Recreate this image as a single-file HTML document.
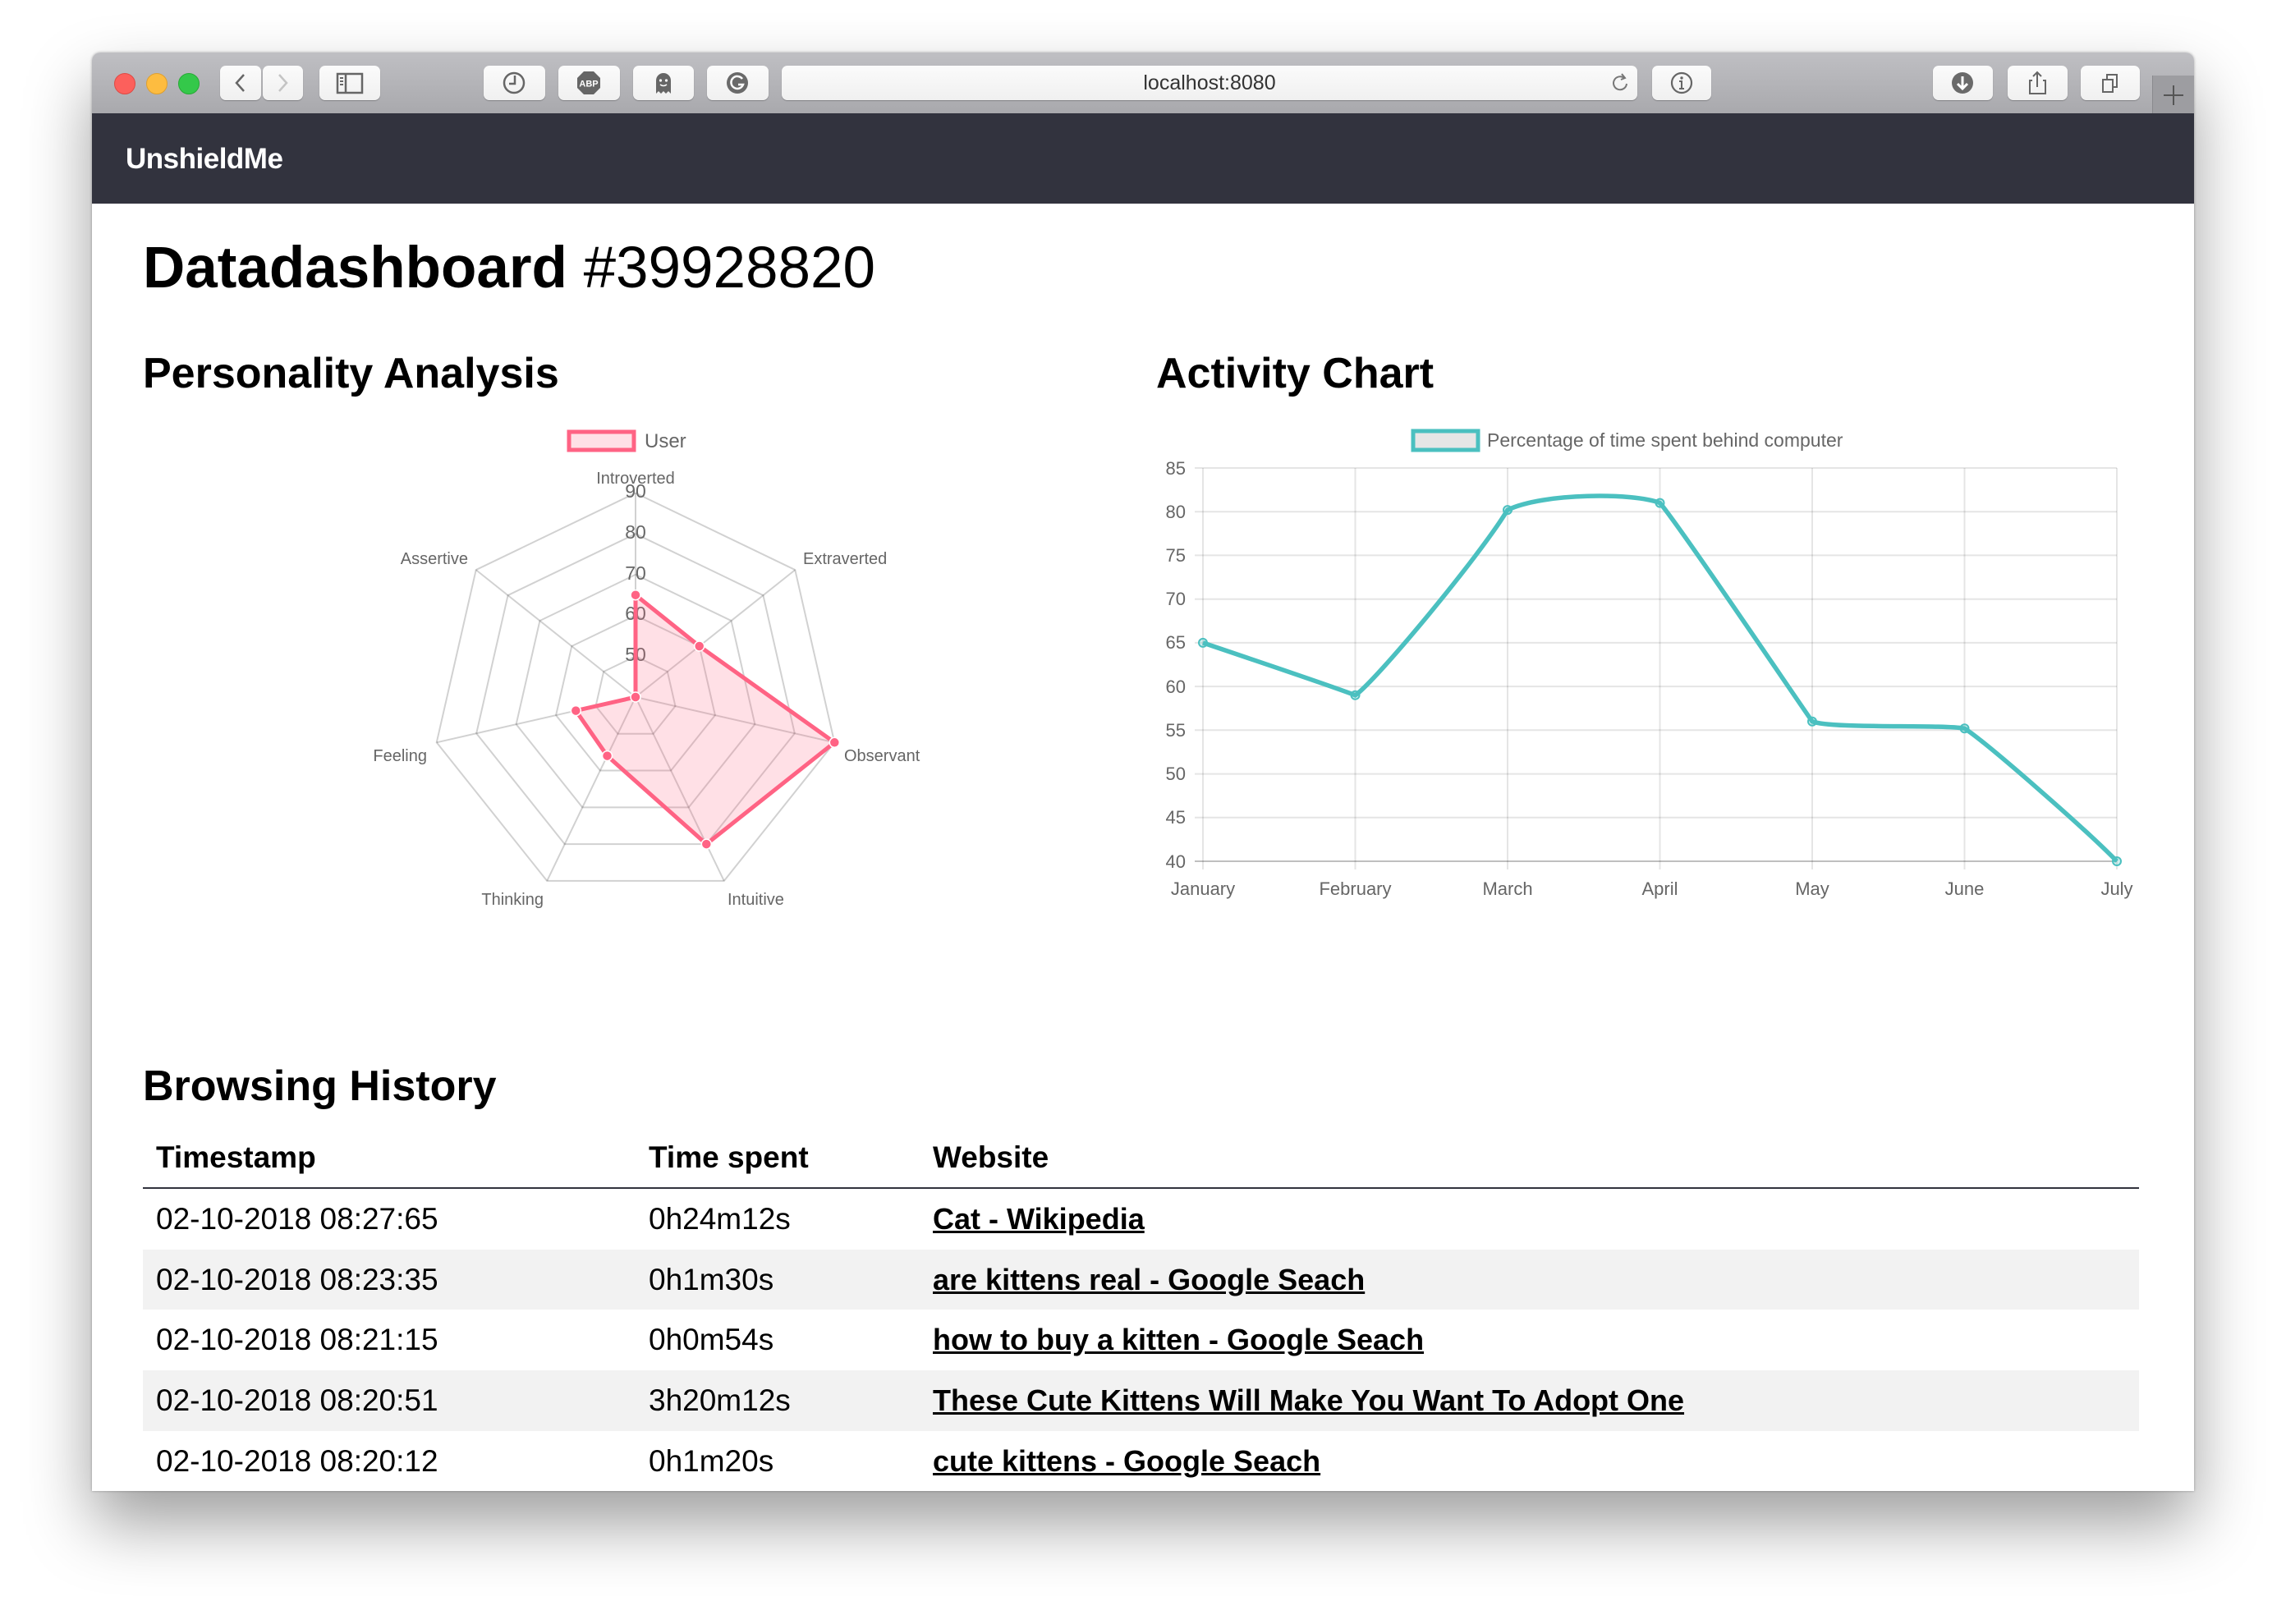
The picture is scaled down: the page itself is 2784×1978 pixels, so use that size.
<!DOCTYPE html>
<html><head><meta charset="utf-8">
<style>
html,body{margin:0;padding:0;width:2784px;height:1978px;background:#fff;overflow:hidden;font-family:"Liberation Sans",Arial,sans-serif;}
#win{position:absolute;left:112px;top:64px;width:2560px;height:1752px;overflow:hidden;background:#fff;border-radius:10px 10px 0 0;box-shadow:0 40px 80px rgba(0,0,0,0.38),0 0 3px rgba(0,0,0,0.3);}
#tb{position:absolute;left:0;top:0;width:2560px;height:74px;background:linear-gradient(#bfbfc3,#a9a9ad);border-bottom:1px solid #98989c;}
.btn{position:absolute;top:16px;height:42px;background:linear-gradient(#fbfbfb,#f0f0f0);border-radius:7px;box-shadow:0 1px 1px rgba(0,0,0,0.25);}
.btn svg{position:absolute;left:0;top:0;}
.tl{position:absolute;top:25px;width:24px;height:24px;border-radius:50%;}
#nav{position:absolute;left:0;top:74px;width:2560px;height:110px;background:#32333e;}
#nav span{position:absolute;left:41px;top:36px;color:#fff;font-weight:bold;font-size:35px;letter-spacing:-0.5px;}
h1{position:absolute;left:62px;top:218px;margin:0;font-size:71px;line-height:90px;font-weight:bold;color:#000;white-space:nowrap;}
h1 span{font-weight:normal;}
h2{position:absolute;margin:0;font-size:52px;line-height:64px;font-weight:bold;color:#000;white-space:nowrap;}
#charts{position:absolute;left:-112px;top:-64px;}
table{position:absolute;left:62px;top:1310px;width:2431px;border-collapse:collapse;font-size:37px;color:#000;}
th{text-align:left;font-weight:bold;height:72px;padding:0 0 0 16px;border-bottom:2px solid #32333e;vertical-align:middle;}
td{height:73.7px;padding:0 0 0 16px;vertical-align:middle;white-space:nowrap;}
tr.s td{background:#f2f2f2;}
a{color:#000;font-weight:bold;text-decoration:underline;font-size:36px;}
</style></head><body>
<div id="win">
 <div id="tb">
  <div class="tl" style="left:27px;background:#fc605c;border:1px solid #de4a44;"></div>
  <div class="tl" style="left:66px;background:#fdbc40;border:1px solid #dea030;"></div>
  <div class="tl" style="left:105px;background:#34c84a;border:1px solid #27aa35;"></div>
  <div class="btn" style="left:156px;width:50px;"><svg width="50" height="42"><path d="M29 11 L20 21 L29 31" fill="none" stroke="#666" stroke-width="2.5"/></svg></div>
  <div class="btn" style="left:208px;width:49px;"><svg width="49" height="42"><path d="M20 11 L29 21 L20 31" fill="none" stroke="#c4c4c4" stroke-width="2.5"/></svg></div>
  <div class="btn" style="left:277px;width:74px;"><svg width="74" height="42"><rect x="22" y="10" width="30" height="23" fill="none" stroke="#666" stroke-width="2.5"/><line x1="32" y1="10" x2="32" y2="33" stroke="#666" stroke-width="2.5"/><path d="M25 15h4M25 19h4M25 23h4" stroke="#666" stroke-width="2"/></svg></div>
  <div class="btn" style="left:477px;width:75px;"><svg width="75" height="42"><circle cx="37" cy="21" r="12" fill="none" stroke="#666" stroke-width="2.5"/><path d="M38 12 V22 H31" fill="none" stroke="#666" stroke-width="2.5"/></svg></div>
  <div class="btn" style="left:568px;width:75px;"><svg width="75" height="42"><polygon points="31,7 43,7 51,15 51,27 43,35 31,35 23,27 23,15" fill="#666"/><text x="37" y="25.5" text-anchor="middle" font-family="Liberation Sans" font-weight="bold" font-size="11" fill="#fff">ABP</text></svg></div>
  <div class="btn" style="left:659px;width:74px;"><svg width="74" height="42"><path d="M28 34 V18 a9 9 0 0 1 18 0 V34 l-3 -3 -3 3 -3 -3 -3 3 -3 -3 z" fill="#666"/><circle cx="33.5" cy="18" r="1.6" fill="#fff"/><circle cx="40.5" cy="18" r="1.6" fill="#fff"/><path d="M33 23 q4 3 8 0" stroke="#fff" stroke-width="1.5" fill="none"/></svg></div>
  <div class="btn" style="left:749px;width:75px;"><svg width="75" height="42"><circle cx="37" cy="21" r="13" fill="#6a6a6a"/><path d="M43 16 a7.5 7.5 0 1 0 1 7 h-6" fill="none" stroke="#fff" stroke-width="2.5"/></svg></div>
  <div class="btn" style="left:840px;width:1042px;"><span style="position:absolute;left:0;width:1042px;top:7px;text-align:center;font-size:25px;color:#333;">localhost:8080</span><svg width="1042" height="42"><path d="M1026 15 a8 8 0 1 0 3 7" fill="none" stroke="#777" stroke-width="2"/><path d="M1023 10 l4 5 -5 2" fill="none" stroke="#777" stroke-width="2"/></svg></div>
  <div class="btn" style="left:1900px;width:72px;"><svg width="72" height="42"><circle cx="36" cy="21" r="12" fill="none" stroke="#666" stroke-width="2.2"/><circle cx="36" cy="15" r="1.7" fill="#666"/><path d="M33 19h3v9M33 28h6" stroke="#666" stroke-width="2" fill="none"/></svg></div>
  <div class="btn" style="left:2242px;width:73px;"><svg width="73" height="42"><circle cx="36" cy="21" r="13" fill="#6a6a6a"/><path d="M36 13 V28 M30 22 l6 6 6 -6" stroke="#fff" stroke-width="3" fill="none"/></svg></div>
  <div class="btn" style="left:2333px;width:73px;"><svg width="73" height="42"><path d="M30 18 h-3 v16 h19 v-16 h-3" fill="none" stroke="#666" stroke-width="2"/><path d="M36 8 V26 M31 13 l5 -5 5 5" fill="none" stroke="#666" stroke-width="2"/></svg></div>
  <div class="btn" style="left:2422px;width:72px;"><svg width="72" height="42"><rect x="27" y="17" width="12" height="15" fill="none" stroke="#666" stroke-width="2"/><path d="M32 17 V11 h12 v15 h-5" fill="none" stroke="#666" stroke-width="2"/></svg></div>
  <div style="position:absolute;left:2509px;top:28px;width:51px;height:46px;background:#9d9da1;border-left:1px solid #8a8a8e;"><svg width="51" height="46"><path d="M25 12 V36 M13 24 H37" stroke="#555" stroke-width="2"/></svg></div>
 </div>
 <div id="nav"><span>UnshieldMe</span></div>

 <h1>Datadashboard <span>#39928820</span></h1>
 <h2 style="left:62px;top:359px;">Personality Analysis</h2>
 <h2 style="left:1296px;top:359px;">Activity Chart</h2>

 <svg id="charts" width="2784" height="1978" font-family="Liberation Sans, Arial, sans-serif">
  <rect x="693" y="526" width="79" height="22" fill="rgba(255,99,132,0.2)" stroke="#ff6384" stroke-width="5"/>
  <text x="785" y="545" font-size="24" fill="#666">User</text>
  <g fill="none" stroke="rgba(0,0,0,0.18)" stroke-width="2">
   <polygon transform="translate(774 849) scale(49.7)" vector-effect="non-scaling-stroke" points="0,-1 .7818,-.6235 .9749,.2225 .4339,.901 -.4339,.901 -.9749,.2225 -.7818,-.6235"/>
   <polygon transform="translate(774 849) scale(99.4)" vector-effect="non-scaling-stroke" points="0,-1 .7818,-.6235 .9749,.2225 .4339,.901 -.4339,.901 -.9749,.2225 -.7818,-.6235"/>
   <polygon transform="translate(774 849) scale(149.1)" vector-effect="non-scaling-stroke" points="0,-1 .7818,-.6235 .9749,.2225 .4339,.901 -.4339,.901 -.9749,.2225 -.7818,-.6235"/>
   <polygon transform="translate(774 849) scale(198.8)" vector-effect="non-scaling-stroke" points="0,-1 .7818,-.6235 .9749,.2225 .4339,.901 -.4339,.901 -.9749,.2225 -.7818,-.6235"/>
   <polygon transform="translate(774 849) scale(248.5)" vector-effect="non-scaling-stroke" points="0,-1 .7818,-.6235 .9749,.2225 .4339,.901 -.4339,.901 -.9749,.2225 -.7818,-.6235"/>
   <path d="M774 849 L774 600.5 M774 849 L968.3 694.1 M774 849 L1016.3 904.3 M774 849 L881.8 1072.9 M774 849 L666.2 1072.9 M774 849 L531.7 904.3 M774 849 L579.7 694.1"/>
  </g>
  <g font-size="23" fill="#666" text-anchor="middle">
   <text x="774" y="606">90</text><text x="774" y="656">80</text><text x="774" y="706">70</text><text x="774" y="755">60</text><text x="774" y="805">50</text>
  </g>
  <polygon points="774,724.7 851.7,787 1016.3,904.3 860.3,1028.1 739.5,920.6 701.3,865.6 774,849" fill="rgba(255,99,132,0.2)" stroke="#ff6384" stroke-width="5" stroke-linejoin="miter"/>
  <g fill="#ff6384" stroke="#fff" stroke-width="1.5">
   <circle cx="774" cy="724.7" r="6"/><circle cx="851.7" cy="787" r="6"/><circle cx="1016.3" cy="904.3" r="6"/><circle cx="860.3" cy="1028.1" r="6"/><circle cx="739.5" cy="920.6" r="6"/><circle cx="701.3" cy="865.6" r="6"/><circle cx="774" cy="849" r="6"/>
  </g>
  <g font-size="20" fill="#666">
   <text x="774" y="589" text-anchor="middle">Introverted</text>
   <text x="978" y="687">Extraverted</text>
   <text x="1028" y="927">Observant</text>
   <text x="886" y="1102">Intuitive</text>
   <text x="662" y="1102" text-anchor="end">Thinking</text>
   <text x="520" y="927" text-anchor="end">Feeling</text>
   <text x="570" y="687" text-anchor="end">Assertive</text>
  </g>

  <rect x="1721" y="525" width="79" height="23" fill="#e6e6e6" stroke="#4bc0c0" stroke-width="5"/>
  <text x="1811" y="544" font-size="23" fill="#666">Percentage of time spent behind computer</text>
  <g stroke="rgba(0,0,0,0.1)" stroke-width="2">
   <path d="M1455 570H2578M1455 623.2H2578M1455 676.4H2578M1455 729.7H2578M1455 782.9H2578M1455 836.1H2578M1455 889.3H2578M1455 942.6H2578M1455 995.8H2578"/>
   <path d="M1465 570V1059M1650.5 570V1059M1836 570V1059M2021.5 570V1059M2207 570V1059M2392.5 570V1059M2578 570V1059"/>
  </g>
  <path d="M1455 1049H2578" stroke="rgba(0,0,0,0.25)" stroke-width="2"/>
  <g font-size="22" fill="#666" text-anchor="end">
   <text x="1444" y="578">85</text><text x="1444" y="631">80</text><text x="1444" y="684">75</text><text x="1444" y="737">70</text><text x="1444" y="790">65</text><text x="1444" y="844">60</text><text x="1444" y="897">55</text><text x="1444" y="950">50</text><text x="1444" y="1003">45</text><text x="1444" y="1057">40</text>
  </g>
  <g font-size="22" fill="#666" text-anchor="middle">
   <text x="1465" y="1090">January</text><text x="1650.5" y="1090">February</text><text x="1836" y="1090">March</text><text x="2021.5" y="1090">April</text><text x="2207" y="1090">May</text><text x="2392.5" y="1090">June</text><text x="2578" y="1090">July</text>
  </g>
  <path d="M1465 782.9 C1530 805 1620 835 1650.5 846.8 C1675 830 1800 680 1836 621.1 C1880 600 1990 600 2021.5 612.6 C2045 640 2180 840 2207 878.7 C2230 888 2360 882 2392.5 887.2 C2420 905 2540 1010 2578 1049" fill="none" stroke="#4bc0c0" stroke-width="5.5"/>
  <g fill="rgba(75,192,192,0.25)" stroke="#4bc0c0" stroke-width="2">
   <circle cx="1465" cy="782.9" r="5"/><circle cx="1650.5" cy="846.8" r="5"/><circle cx="1836" cy="621.1" r="5"/><circle cx="2021.5" cy="612.6" r="5"/><circle cx="2207" cy="878.7" r="5"/><circle cx="2392.5" cy="887.2" r="5"/><circle cx="2578" cy="1049" r="5"/>
  </g>
 </svg>

 <h2 style="left:62px;top:1227px;">Browsing History</h2>
 <table>
  <tr><th style="width:584px;">Timestamp</th><th style="width:330px;">Time spent</th><th>Website</th></tr>
  <tr><td>02-10-2018 08:27:65</td><td>0h24m12s</td><td><a>Cat - Wikipedia</a></td></tr>
  <tr class="s"><td>02-10-2018 08:23:35</td><td>0h1m30s</td><td><a>are kittens real - Google Seach</a></td></tr>
  <tr><td>02-10-2018 08:21:15</td><td>0h0m54s</td><td><a>how to buy a kitten - Google Seach</a></td></tr>
  <tr class="s"><td>02-10-2018 08:20:51</td><td>3h20m12s</td><td><a>These Cute Kittens Will Make You Want To Adopt One</a></td></tr>
  <tr><td>02-10-2018 08:20:12</td><td>0h1m20s</td><td><a>cute kittens - Google Seach</a></td></tr>
 </table>
</div>
</body></html>
